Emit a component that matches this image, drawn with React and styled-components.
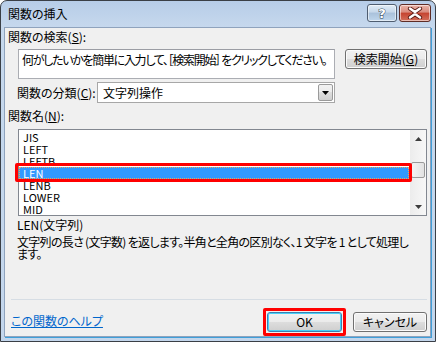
import React from "react";
import styled, { createGlobalStyle } from "styled-components";

const items = ["JIS", "LEFT", "LEFTB", "LEN", "LENB", "LOWER", "MID"];

export default function App() {
  return (
    <>
      <GlobalStyle />
      <Window>
        <TitleBar>
          <Title>関数の挿入</Title>
          <CaptionButtons>
            <HelpButton>?</HelpButton>
            <CloseButton>
              <svg width="16" height="12" viewBox="0 0 16 12">
                <path
                  d="M3 1.5 L8 5 L13 1.5 M3 10.5 L8 7 L13 10.5"
                  stroke="#5a1a14"
                  strokeWidth="4.2"
                  fill="none"
                  strokeLinecap="round"
                />
                <path
                  d="M3 1.5 L8 5 L13 1.5 M3 10.5 L8 7 L13 10.5"
                  stroke="#ffffff"
                  strokeWidth="2.4"
                  fill="none"
                  strokeLinecap="round"
                />
              </svg>
            </CloseButton>
          </CaptionButtons>
        </TitleBar>
        <Content>
          <Label>
            関数の検索(<u>S</u>):
          </Label>
          <SearchRow>
            <SearchBox>何がしたいかを簡単に入力して、［検索開始］ をクリックしてください。</SearchBox>
            <Button wide>
              検索開始(<u>G</u>)
            </Button>
          </SearchRow>
          <CategoryRow>
            <CategoryLabel>
              関数の分類(<u>C</u>):
            </CategoryLabel>
            <Combo>
              <ComboText>文字列操作</ComboText>
              <ComboArrow>
                <svg width="7" height="4" viewBox="0 0 7 4">
                  <path d="M0 0 H7 L3.5 4 Z" fill="#000" />
                </svg>
              </ComboArrow>
            </Combo>
          </CategoryRow>
          <NameLabel>
            関数名(<u>N</u>):
          </NameLabel>
          <ListBox>
            <ListItems>
              {items.map((name) => (
                <ListItem key={name} selected={name === "LEN"}>
                  {name}
                </ListItem>
              ))}
            </ListItems>
            <ScrollBar>
              <ScrollArrow>
                <svg width="7" height="4" viewBox="0 0 7 4">
                  <path d="M0 4 H7 L3.5 0 Z" fill="#3c3c3c" />
                </svg>
              </ScrollArrow>
              <Track>
                <Thumb />
              </Track>
              <ScrollArrow>
                <svg width="7" height="4" viewBox="0 0 7 4">
                  <path d="M0 0 H7 L3.5 4 Z" fill="#3c3c3c" />
                </svg>
              </ScrollArrow>
            </ScrollBar>
            <Highlight />
          </ListBox>
          <Syntax>LEN(文字列)</Syntax>
          <Description>
            <Line>文字列の長さ (文字数) を返します。半角と全角の区別なく、1 文字を 1 として処理し</Line>
            <Line>ます。</Line>
          </Description>
          <Spacer />
          <Separator />
          <Footer>
            <HelpLink href="#">この関数のヘルプ</HelpLink>
            <RedFrame>
              <Button primary>OK</Button>
            </RedFrame>
            <Button>キャンセル</Button>
          </Footer>
        </Content>
      </Window>
    </>
  );
}

const GlobalStyle = createGlobalStyle`
  body {
    margin: 0;
    background: #ffffff;
    font-family: "Noto Sans CJK JP", "Noto Sans", sans-serif;
    font-size: 12px;
    font-feature-settings: "palt";
    color: #000;
  }
  u {
    text-decoration: underline;
    text-underline-offset: 1px;
  }
`;

const Window = styled.div`
  width: 436px;
  height: 342px;
  box-sizing: border-box;
  border: 1px solid #3a3f46;
  border-radius: 7px 7px 0 0;
  background: linear-gradient(#b7cde8, #c6d8ed 26px, #c3d6ec);
  padding: 0 4px 4px 3px;
  display: flex;
  flex-direction: column;
`;

const TitleBar = styled.div`
  height: 26px;
  display: flex;
  align-items: flex-start;
  justify-content: space-between;
  padding-left: 4px;
`;

const Title = styled.div`
  line-height: 16px;
  margin-top: 5px;
`;

const CaptionButtons = styled.div`
  display: flex;
  gap: 2px;
  margin-top: 3px;
`;

const CaptionButton = styled.div`
  height: 18px;
  box-sizing: border-box;
  border: 1px solid #4f5d70;
  border-radius: 3px;
  display: flex;
  align-items: center;
  justify-content: center;
  box-shadow: inset 0 0 0 1px rgba(255, 255, 255, 0.55);
`;

const HelpButton = styled(CaptionButton)`
  width: 30px;
  background: linear-gradient(#e2ecf6, #c5d7ea 45%, #a9c1db 50%, #bfd6ec);
  color: #fff;
  font-family: "DejaVu Sans", sans-serif;
  font-weight: bold;
  font-size: 13px;
  -webkit-text-stroke: 1px #2f3f54;
  paint-order: stroke fill;
`;

const CloseButton = styled(CaptionButton)`
  width: 32px;
  border-color: #5e2c26;
  background: linear-gradient(#eab3a7, #d98a7c 45%, #c5432f 50%, #d3705c);
`;

const Content = styled.div`
  flex: 1;
  background: #f0f0f0;
  border: 1px solid #8fa3bd;
  box-shadow: 1px 1px 0 #3f9fd9;
  padding: 0 3px;
  display: flex;
  flex-direction: column;
`;

const Label = styled.div`
  line-height: 16px;
  margin-top: 1px;
`;

const SearchRow = styled.div`
  display: flex;
  align-items: flex-start;
  gap: 10px;
  margin-top: 4px;
  padding-left: 10px;
`;

const SearchBox = styled.div`
  width: 317px;
  height: 30px;
  box-sizing: border-box;
  background: #fff;
  border: 1px solid #abadb3;
  border-top-color: #9b9da4;
  padding: 2px 3px;
  line-height: 16px;
  letter-spacing: -1.3px;
  white-space: nowrap;
  overflow: hidden;
`;

const Button = styled.button`
  width: ${(p) => (p.wide ? "82px" : p.primary ? "75px" : "74px")};
  height: 20px;
  padding: 0;
  box-sizing: border-box;
  font: inherit;
  font-size: 12px;
  line-height: 16px;
  color: #000;
  border: 1px solid ${(p) => (p.primary ? "#3c7fb1" : "#707070")};
  border-radius: 3px;
  background: linear-gradient(#f2f2f2, #ebebeb 49%, #dddddd 50%, #cfcfcf);
  box-shadow: inset 0 0 0 1px ${(p) => (p.primary ? "#48d0f8" : "#fbfbfb")};
  white-space: nowrap;
  cursor: default;
`;

const CategoryRow = styled.div`
  display: flex;
  align-items: center;
  margin-top: 3px;
  padding-left: 9px;
`;

const CategoryLabel = styled.div`
  width: 80px;
  line-height: 16px;
`;

const Combo = styled.div`
  width: 238px;
  height: 21px;
  box-sizing: border-box;
  background: #fff;
  border: 1px solid #a7a7a7;
  display: flex;
  align-items: center;
  padding: 0 1px 0 5px;
`;

const ComboText = styled.div`
  flex: 1;
  line-height: 16px;
`;

const ComboArrow = styled.div`
  width: 15px;
  height: 17px;
  box-sizing: border-box;
  border: 1px solid #9a9a9a;
  border-radius: 2px;
  background: linear-gradient(#f2f2f2, #ebebeb 49%, #dddddd 50%, #cfcfcf);
  display: flex;
  align-items: center;
  justify-content: center;
`;

const NameLabel = styled.div`
  line-height: 16px;
  margin-top: 5px;
`;

const ListBox = styled.div`
  position: relative;
  width: 409px;
  height: 87px;
  box-sizing: border-box;
  margin-top: 5px;
  margin-left: 10px;
  background: #fff;
  border: 1px solid #828790;
  display: flex;
`;

const ListItems = styled.div`
  flex: 1;
  padding-top: 1px;
`;

const ListItem = styled.div`
  height: 12px;
  line-height: 12px;
  font-size: 11px;
  padding-left: 4px;
  box-sizing: border-box;
  color: ${(p) => (p.selected ? "#fff" : "#000")};
  background: ${(p) => (p.selected ? "#3399ff" : "transparent")};
  outline: ${(p) => (p.selected ? "1px dotted #f2a35a" : "none")};
  outline-offset: -1px;
  margin-right: 1px;
`;

const ScrollBar = styled.div`
  width: 16px;
  display: flex;
  flex-direction: column;
  background: linear-gradient(90deg, #ececec, #f7f7f7);
`;

const ScrollArrow = styled.div`
  height: 17px;
  display: flex;
  align-items: center;
  justify-content: center;
`;

const Track = styled.div`
  flex: 1;
  position: relative;
`;

const Thumb = styled.div`
  position: absolute;
  top: 15px;
  left: 1px;
  width: 14px;
  height: 16px;
  box-sizing: border-box;
  border: 1px solid #9a9a9a;
  border-radius: 2px;
  background: linear-gradient(90deg, #f3f3f3, #e2e2e2);
`;

const Highlight = styled.div`
  position: absolute;
  left: -4px;
  top: 33px;
  width: 397px;
  height: 19px;
  box-sizing: border-box;
  border: 3px solid #ff0000;
  border-radius: 2px;
  pointer-events: none;
`;

const Syntax = styled.div`
  line-height: 14px;
  margin-top: 2px;
  padding-left: 9px;
`;

const Description = styled.div`
  margin-top: 4px;
  padding-left: 9px;
  line-height: 12px;
  letter-spacing: -0.7px;
`;

const Line = styled.div`
  white-space: nowrap;
`;

const Spacer = styled.div`
  flex: 1;
`;

const Separator = styled.div`
  height: 1px;
  background: #d6dde4;
  margin-left: 3px;
`;

const Footer = styled.div`
  height: 28px;
  margin-top: 8px;
  display: flex;
  align-items: center;
  gap: 7px;
  padding-left: 3px;
`;

const HelpLink = styled.a`
  color: #0066cc;
  text-decoration: underline;
  line-height: 16px;
  margin-right: auto;
  margin-bottom: 3px;
`;

const RedFrame = styled.div`
  border: 3px solid #ff0000;
  border-radius: 2px;
  padding: 1px;
  display: flex;
`;
